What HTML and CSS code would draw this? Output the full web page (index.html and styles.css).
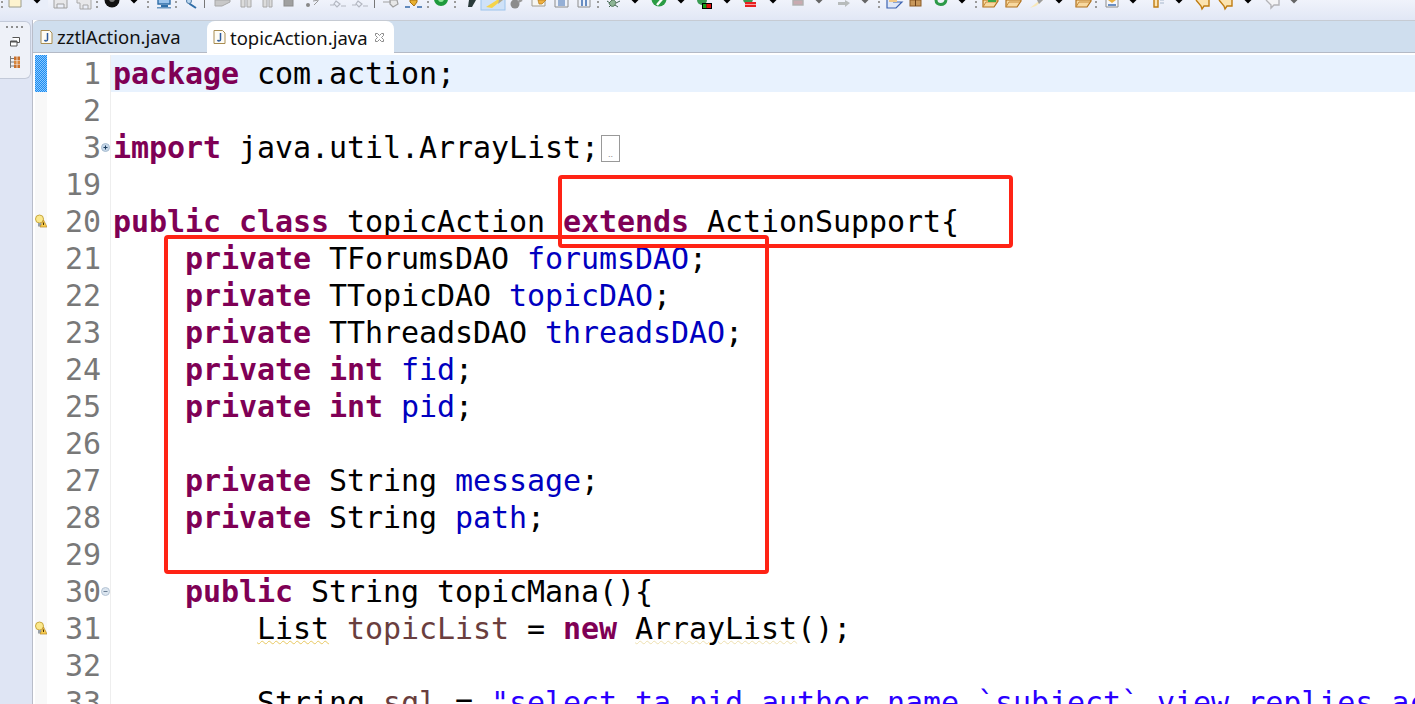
FILE: index.html
```html
<!DOCTYPE html>
<html lang="en">
<head>
<meta charset="utf-8">
<title>topicAction.java</title>
<link rel="stylesheet" href="styles.css">
</head>
<body>
<div class="app">
  <header class="toolbar">
    <svg class="toolbar-strip" width="1415" height="20" viewBox="0 0 1415 20">
      <defs>
        <polygon id="arrow" points="-3.5,0 3.5,0 0,3.5"/>
        <g id="dots" fill="#9a9a9a"><rect x="0" y="1" width="2" height="2"/><rect x="0" y="6" width="2" height="2"/></g>
        <g id="folder"><path d="M1 0V7H12L16 1V0Z" fill="#f8d9a0" stroke="#b0701c" stroke-width="1.2"/><path d="M1 7L4 2H15" fill="none" stroke="#c88c3c"/></g>
        <g id="ghost" fill="none" stroke="#b4b8c2" stroke-width="1.2"><path d="M0 5H4M6 1L10 4 7 7 4 4ZM11 6H16"/></g>
        <g id="callout"><path d="M0 0 L5 6 L6 9 L8 6 L13 6 L13 0" fill="#fbe3b0" stroke="#c07c10" stroke-width="1.4"/></g>
      </defs>
      <rect x="4" y="-1" width="44" height="10" fill="#e9eef9"/>
      <rect x="1" y="1" width="2" height="2" fill="#9a9a9a"/><rect x="1" y="6" width="2" height="2" fill="#9a9a9a"/>
      <path d="M9 0V7H21V0" fill="#fdf3cf" stroke="#9c9c8c"/>
      <use href="#arrow" x="37"/>
      <path d="M54 0V8H67V0M57 8V4H64V8" fill="#e8e8ea" stroke="#a0a0a0"/>
      <path d="M77 0V3H80V9H91V0M83 9V5H88V9" fill="#e8e8ea" stroke="#a8a8a8"/>
      <use href="#dots" x="96"/>
      <circle cx="112" cy="0" r="7.5" fill="#111"/><circle cx="112" cy="-1" r="3" fill="#777"/>
      <use href="#arrow" x="134"/>
      <use href="#dots" x="147"/>
      <path d="M158 0V4H170V0" fill="#9cc4ec" stroke="#2f6ea8" stroke-width="1.4"/><rect x="161" y="5" width="7" height="2" fill="#2f6ea8"/><rect x="157" y="7" width="14" height="1.5" fill="#6a96c0"/>
      <use href="#dots" x="175"/>
      <path d="M187 0L190 4 196 8" fill="none" stroke="#2f6ea8" stroke-width="2"/><circle cx="189" cy="1" r="2.5" fill="#bcd8f0" stroke="#4f7ca8"/>
      <rect x="204" y="0" width="1" height="8" fill="#777"/>
      <path d="M215 0V6H222L230 2V0Z" fill="#c8c8c8" stroke="#a8a8a8"/>
      <path d="M241 0V7H245V0M247 0V7H251V0" fill="#dcdcdc" stroke="#a8a8a8"/>
      <path d="M263 0V7H267V0M269 0V7H272V0" fill="#dcdcdc" stroke="#a8a8a8"/>
      <rect x="284" y="-2" width="9" height="8" fill="#a0a0a0" stroke="#8c8c8c"/>
      <circle cx="308" cy="5" r="2" fill="#888"/><path d="M313 1L319 0M314 5L318 1" stroke="#999" fill="none"/>
      <use href="#ghost" x="330"/>
      <use href="#ghost" x="352"/>
      <rect x="374" y="0" width="1" height="8" fill="#777"/>
      <path d="M383 2H391M390 0L397 0 398 4 393 7 390 4Z" fill="#e8e8e8" stroke="#a0a0a0" stroke-width="1.2"/>
      <path d="M405 7H410M417 7H422" stroke="#3468a8" stroke-width="1.6"/><path d="M410 0H417V2L414 6 410 2Z" fill="#e8b030" stroke="#a87010"/>
      <use href="#dots" x="427"/>
      <circle cx="441" cy="-1" r="7" fill="#1e9a3c"/><circle cx="441" cy="-1" r="3" fill="#8ee89a"/>
      <use href="#dots" x="454"/>
      <path d="M469 0H476L472 7H468Z" fill="#2a3a3a"/>
      <rect x="481" y="-1" width="24" height="11" fill="#cfe2f8" stroke="#9cc4ec"/>
      <path d="M486 7L497 0H502L492 8Z" fill="#f6d44a"/><path d="M499 0H503L498 4Z" fill="#b0a890"/>
      <circle cx="515" cy="4" r="4.5" fill="#8c8c8c"/><path d="M518 2L522 0" stroke="#999" stroke-width="2.5"/>
      <path d="M532 0V6H545V0" fill="#f6f6f2" stroke="#a09c90"/><path d="M538 0H546L542 4H539Z" fill="#f0b040" stroke="#b07818" stroke-width=".7"/>
      <path d="M555 0V7H568V0" fill="#eef2fa" stroke="#8c8c8c"/><path d="M558 1H565M558 3H565M558 5H565" stroke="#3c6cb0"/>
      <path d="M578 0V7H590V0" fill="#eef2fa" stroke="#8c8c8c"/><path d="M582 0V6M586 0V6" stroke="#3c6cb0" stroke-width="1.5"/>
      <use href="#dots" x="597"/>
      <path d="M612 0C616 0 617 3 614 6 612 7 610 6 609 3Z" fill="#8cb494" stroke="#557a5c"/><path d="M607 1L610 3M620 1L616 3M609 7L611 5M618 7L615 5" stroke="#406050"/>
      <use href="#arrow" x="635"/>
      <circle cx="659" cy="-1" r="7.5" fill="#2a9c44"/><path d="M657 5L663 -2" stroke="#fff" stroke-width="2.4"/>
      <use href="#arrow" x="681"/>
      <circle cx="702" cy="0" r="5" fill="#3a9c54"/><rect x="702" y="3" width="10" height="6" fill="#000"/><rect x="703" y="4" width="3.5" height="4" fill="#18a018"/><rect x="706.500" y="4" width="4.500" height="4" fill="#e01010"/>
      <use href="#arrow" x="727"/>
      <circle cx="748" cy="-1" r="5" fill="#3a9c54"/><rect x="745" y="2" width="11" height="5" fill="#e82020"/><rect x="745" y="4" width="11" height="1" fill="#f8a0a0"/>
      <use href="#arrow" x="773"/>
      <rect x="793" y="0" width="10" height="5" fill="#c8aab0" stroke="#b0b0b0" stroke-width="1.400"/>
      <use href="#arrow" x="819" fill="#666"/>
      <path d="M838 2H845V0L850 3 845 7V5H838Z" fill="#b8bcbc"/>
      <use href="#arrow" x="865" fill="#666"/>
      <use href="#dots" x="878"/>
      <path d="M887 0V8H896L902 2H893" fill="#dfe8f8" stroke="#3c62b0" stroke-width="1.200"/><rect x="889" y="-1" width="8" height="3" fill="#f0c888"/>
      <rect x="910" y="0" width="11" height="6" fill="#c8985c" stroke="#8c5c28"/><path d="M915.500 0V6" stroke="#6c4018"/>
      <path d="M936 0C936 6 945 6 946 0" fill="none" stroke="#2c9a48" stroke-width="3"/>
      <use href="#arrow" x="962"/>
      <use href="#dots" x="975"/>
      <use href="#folder" x="982"/><rect x="988" y="0" width="8" height="2" fill="#3ca848"/>
      <use href="#folder" x="1005"/>
      <path d="M1030 8L1040 0H1043L1036 6Z" fill="#f8e8b8"/><path d="M1037 0H1043L1039 4Z" fill="#9c9c9c"/>
      <use href="#arrow" x="1059"/>
      <use href="#folder" x="1075"/>
      <use href="#dots" x="1095"/>
      <path d="M1106 0V7H1118V0" fill="#f4f6fb" stroke="#8c8c8c"/><path d="M1108 0L1112 3 1116 0Z" fill="#e8b040"/><path d="M1108 5H1116" stroke="#3c6cb0" stroke-width="1.500"/>
      <use href="#arrow" x="1133"/>
      <path d="M1154 0V7H1158V0" fill="#fbe3b0" stroke="#c07c10" stroke-width="1.400"/><path d="M1160 0H1164M1160 3H1164" stroke="#a8b8cc"/>
      <use href="#arrow" x="1179"/>
      <use href="#callout" x="1196"/>
      <use href="#callout" x="1219"/>
      <use href="#arrow" x="1248"/>
      <path d="M1266 0L1271 5 1271 8 1274 5H1279V0" fill="#f4f4f6" stroke="#b4b4b8" stroke-width="1.400"/>
      <use href="#arrow" x="1294" fill="#666"/>
    </svg>
  </header>

  <div class="workbench">
    <aside class="rail">
      <div class="stack">
        <div class="stack-grip"></div>
        <svg class="stack-icon" width="12" height="12" viewBox="0 0 12 12"><path d="M3.500 1.500H10.500V6.500H8M1.500 5H8V10H1.500Z" fill="#fff" stroke="#555"/><rect x="1.500" y="5" width="6.500" height="1.500" fill="#555"/></svg>
        <svg class="stack-icon" width="12" height="14" viewBox="0 0 12 14"><path d="M1.500 1V13M1.500 3.500H5M1.500 7H5M1.500 11H5" stroke="#7a7a7a" fill="none"/><rect x="5" y="1.500" width="6" height="3.500" fill="#c8702c"/><rect x="5" y="5.500" width="6" height="3.500" fill="#d8863c"/><rect x="5" y="9.500" width="6" height="3.500" fill="#c8702c"/><path d="M8 1V13" stroke="#fff" stroke-width=".7"/></svg>
      </div>
    </aside>

    <main class="editor-pane">
      <nav class="tabs">
        <div class="tab">
          <svg class="file-icon" width="13" height="14" viewBox="0 0 13 14"><path d="M1 .5H9.500L12 3V13.500H1Z" fill="#fdfcf6" stroke="#a88c50"/><path d="M7.500 3V9.500C7.500 11 5.500 11.500 4.500 10" fill="none" stroke="#2c5a9c" stroke-width="1.500"/></svg>
          <span>zztlAction.java</span>
        </div>
        <div class="tab tab-active">
          <svg class="file-icon" width="13" height="14" viewBox="0 0 13 14"><path d="M1 .5H9.500L12 3V13.500H1Z" fill="#fdfcf6" stroke="#a88c50"/><path d="M7.500 3V9.500C7.500 11 5.500 11.500 4.500 10" fill="none" stroke="#2c5a9c" stroke-width="1.500"/></svg>
          <span>topicAction.java</span>
          <svg class="close-icon" width="11" height="11" viewBox="0 0 11 11"><path d="M1.500 1.500H3.500L5.500 3.500 7.500 1.500H9.500V3.500L7.500 5.500 9.500 7.500V9.500H7.500L5.500 7.500 3.500 9.500H1.500V7.500L3.500 5.500 1.500 3.500Z" fill="#fff" stroke="#8a8a8a"/></svg>
        </div>
      </nav>

      <section class="editor">
        <div class="row row-current"><div class="mark mark-blue"></div><div class="num">1</div><div class="fold"></div><div class="code"><b>package</b> com.action;</div></div>
        <div class="row"><div class="mark"></div><div class="num">2</div><div class="fold"></div><div class="code"></div></div>
        <div class="row"><div class="mark"></div><div class="num">3</div><div class="fold"><svg width="9" height="9" viewBox="0 0 9 9"><circle cx="4.500" cy="4.500" r="4" fill="#c6d8ea" stroke="#a8bccf"/><path d="M2.500 4.500H6.500M4.500 2.500V6.500" stroke="#1c3c5c"/></svg></div><div class="code"><b>import</b> java.util.ArrayList;<span class="folded">..</span></div></div>
        <div class="row"><div class="mark"></div><div class="num">19</div><div class="fold"></div><div class="code"></div></div>
        <div class="row"><div class="mark"><svg width="12" height="15" viewBox="0 0 12 15"><circle cx="4.500" cy="5" r="4" fill="#fbe88c" stroke="#c8a840"/><rect x="3" y="9" width="3" height="3.500" fill="#98a0a8"/><path d="M8.500 6L12 13H5Z" fill="#f8cc50" stroke="#b88820" stroke-width=".7"/><path d="M8.500 8.500V11" stroke="#443000"/></svg></div><div class="num">20</div><div class="fold"></div><div class="code"><b>public</b> <b>class</b> topicAction <b>extends</b> ActionSupport{</div></div>
        <div class="row"><div class="mark"></div><div class="num">21</div><div class="fold"></div><div class="code">    <b>private</b> TForumsDAO <i>forumsDAO</i>;</div></div>
        <div class="row"><div class="mark"></div><div class="num">22</div><div class="fold"></div><div class="code">    <b>private</b> TTopicDAO <i>topicDAO</i>;</div></div>
        <div class="row"><div class="mark"></div><div class="num">23</div><div class="fold"></div><div class="code">    <b>private</b> TThreadsDAO <i>threadsDAO</i>;</div></div>
        <div class="row"><div class="mark"></div><div class="num">24</div><div class="fold"></div><div class="code">    <b>private</b> <b>int</b> <i>fid</i>;</div></div>
        <div class="row"><div class="mark"></div><div class="num">25</div><div class="fold"></div><div class="code">    <b>private</b> <b>int</b> <i>pid</i>;</div></div>
        <div class="row"><div class="mark"></div><div class="num">26</div><div class="fold"></div><div class="code"></div></div>
        <div class="row"><div class="mark"></div><div class="num">27</div><div class="fold"></div><div class="code">    <b>private</b> String <i>message</i>;</div></div>
        <div class="row"><div class="mark"></div><div class="num">28</div><div class="fold"></div><div class="code">    <b>private</b> String <i>path</i>;</div></div>
        <div class="row"><div class="mark"></div><div class="num">29</div><div class="fold"></div><div class="code"></div></div>
        <div class="row"><div class="mark"></div><div class="num">30</div><div class="fold"><svg width="9" height="9" viewBox="0 0 9 9"><circle cx="4.500" cy="4.500" r="4" fill="#dbe5ef" stroke="#b4c4d4"/><path d="M2.500 4.500H6.500" stroke="#6c8096"/></svg></div><div class="code">    <b>public</b> String topicMana(){</div></div>
        <div class="row"><div class="mark"><svg width="12" height="15" viewBox="0 0 12 15"><circle cx="4.500" cy="5" r="4" fill="#fbe88c" stroke="#c8a840"/><rect x="3" y="9" width="3" height="3.500" fill="#98a0a8"/><path d="M8.500 6L12 13H5Z" fill="#f8cc50" stroke="#b88820" stroke-width=".7"/><path d="M8.500 8.500V11" stroke="#443000"/></svg></div><div class="num">31</div><div class="fold"></div><div class="code">        <u>List</u> <em>topicList</em> = <b>new</b> <u class="faint">ArrayList</u>();</div></div>
        <div class="row"><div class="mark"></div><div class="num">32</div><div class="fold"></div><div class="code"></div></div>
        <div class="row"><div class="mark"></div><div class="num">33</div><div class="fold"></div><div class="code">        String <em>sql</em> = <s>"select ta.pid,author,name,`subject`,view,replies,ac</s></div></div>
      </section>
    </main>
  </div>

  <div class="callout-box box-extends"></div>
  <div class="callout-box box-fields"></div>
</div>
</body>
</html>
```
FILE: styles.css
```css
* { box-sizing: border-box; }
html, body { margin: 0; height: 100%; overflow: hidden; background: #fff; }

.app {
  position: relative;
  width: 1415px;
  height: 704px;
  overflow: hidden;
  display: flex;
  flex-direction: column;
}

.toolbar {
  flex: none;
  height: 20px;
  background: linear-gradient(#f0f3fb, #e1e7f5);
}
.toolbar-strip { display: block; }

.workbench { flex: 1; display: flex; min-height: 0; }

.rail {
  flex: none;
  width: 33px;
  background: #dfe5f4;
  border-right: 1px solid #b9bdc9;
  padding-top: 1px;
}
.stack {
  width: 31px;
  height: 58px;
  background: #eef1f8;
  border: 1px solid #c3cad9;
  border-left: 0;
  border-radius: 0 6px 6px 0;
  display: flex;
  flex-direction: column;
  align-items: center;
}
.stack-grip {
  width: 18px;
  height: 2px;
  margin: 4px 0 8px;
  background: repeating-linear-gradient(90deg, #8e8e8e 0 2px, transparent 2px 5px);
}
.stack-icon { display: block; margin-bottom: 7px; }

.editor-pane { flex: 1; min-width: 0; display: flex; flex-direction: column; }

.tabs {
  flex: none;
  height: 33px;
  display: flex;
  align-items: flex-end;
  background: #cfdeee;
  border-top: 1px solid #c6cbd3;
  border-bottom: 1px solid #b4bac6;
  border-top-left-radius: 6px;
  font-family: "Noto Sans", sans-serif;
  font-size: 18.5px;
  color: #111;
}
.tab {
  height: 31px;
  display: flex;
  align-items: center;
  gap: 4px;
  padding: 0 0 0 7px;
  width: 174px;
  white-space: nowrap;
}
.tab-active {
  height: 32px;
  margin-bottom: -1px;
  width: 187px;
  background: #fff;
  border-radius: 8px 8px 0 0;
  padding-left: 6px;
}
.file-icon { flex: none; }
.close-icon { flex: none; margin-left: 2px; }

.editor {
  flex: 1;
  min-height: 0;
  overflow: hidden;
  padding-top: 2px;
  background: #fff;
  font-family: "DejaVu Sans Mono", monospace;
  font-size: 30px;
  letter-spacing: -0.06px;
}

.row {
  height: 37px;
  line-height: 38px;
  display: flex;
  white-space: pre;
}
.row-current .code { background: #e8f2fe; }

.mark {
  flex: none;
  width: 12px;
  margin-left: 2px;
  background: #f8f8f8;
  display: flex;
  align-items: center;
}
.mark svg { display: block; flex: none; }
.mark-blue {
  background: repeating-conic-gradient(#1a8cf0 0 25%, #8cc8ff 0 50%) 0 0 / 2px 2px;
}

.num {
  flex: none;
  width: 54px;
  text-align: right;
  color: #787878;
}
.fold {
  flex: none;
  width: 10px;
  border-right: 1px solid #eeeeee;
  display: flex;
  align-items: center;
}
.fold svg { display: block; }

.code {
  flex: 1;
  min-width: 0;
  padding-left: 2px;
  color: #000;
}
.code b { color: #7f0055; font-weight: 700; }
.code i { color: #0000c0; font-style: normal; }
.code em { color: #6a3e3e; font-style: normal; }
.code s { color: #2a00ff; text-decoration: none; }
.code u {
  text-decoration: underline wavy #e8c860 1px;
  text-underline-offset: 1px;
}
.code u.faint { text-decoration-color: #eee0b0; }
.folded {
  display: inline-block;
  width: 19px;
  height: 27px;
  margin-left: 2px;
  border: 1px solid #999;
  vertical-align: -4px;
  font-family: "Liberation Sans", sans-serif;
  font-size: 9px;
  line-height: 36px;
  text-align: center;
  color: #888;
  overflow: hidden;
}

.callout-box {
  position: absolute;
  border: 4px solid #ff2315;
  border-radius: 4px;
}
.box-extends { left: 558px; top: 175px; width: 455px; height: 73px; }
.box-fields { left: 164px; top: 235px; width: 605px; height: 339px; }
```
